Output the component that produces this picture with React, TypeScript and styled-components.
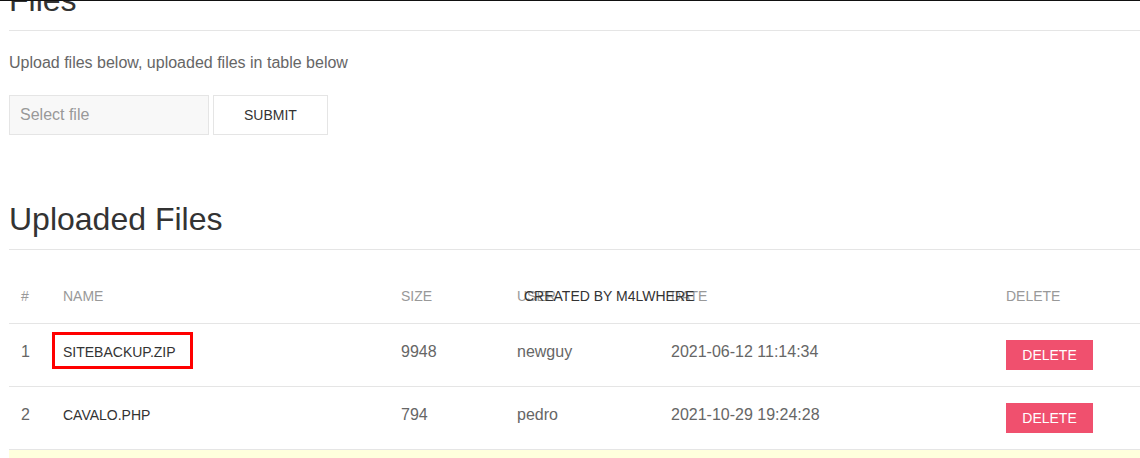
import React from "react";
import styled, { createGlobalStyle } from "styled-components";

const Global = createGlobalStyle`
  html, body {
    margin: 0;
    padding: 0;
    background: #fff;
    overflow: hidden;
  }
  body {
    font-family: "Liberation Sans", Arial, sans-serif;
    font-size: 16px;
    line-height: 1.5;
    color: #666;
  }
  * { box-sizing: border-box; }
`;

const TopEdge = styled.div`
  position: fixed;
  top: 0;
  left: 0;
  right: 0;
  height: 1px;
  background: #111;
  z-index: 10;
`;

const Page = styled.main`
  display: flow-root;
  padding: 0 0 0 9px;
`;

const Heading = styled.h2<{ $first?: boolean }>`
  margin: ${(p) => (p.$first ? "-21px 0 0" : "63px 0 0")};
  padding-bottom: 9px;
  border-bottom: 1px solid #e5e5e5;
  font-size: 32px;
  line-height: 42px;
  font-weight: 400;
  color: #333;
`;

const Intro = styled.p`
  margin: 20px 0 0;
  font-size: 16px;
  line-height: 24px;
  color: #666;
`;

const UploadForm = styled.form`
  display: flex;
  gap: 4px;
  margin-top: 20px;
`;

const FileInput = styled.input`
  width: 200px;
  height: 40px;
  padding: 0 10px;
  margin: 0;
  border: 1px solid #e5e5e5;
  background: #f8f8f8;
  font-family: inherit;
  font-size: 16px;
  color: #666;
  outline: none;
  &::placeholder {
    color: #999;
  }
`;

const Button = styled.button<{ $danger?: boolean; $small?: boolean }>`
  margin: 0;
  padding: 0 ${(p) => (p.$small ? "15px" : "30px")};
  min-width: ${(p) => (p.$small ? "87px" : "0")};
  height: ${(p) => (p.$small ? "30px" : "40px")};
  line-height: ${(p) => (p.$small ? "28px" : "38px")};
  border: 1px solid ${(p) => (p.$danger ? "transparent" : "#e5e5e5")};
  background: ${(p) => (p.$danger ? "#f0506e" : "#fff")};
  color: ${(p) => (p.$danger ? "#fff" : "#333")};
  font-family: inherit;
  font-size: 14px;
  text-transform: uppercase;
  cursor: pointer;
  vertical-align: middle;
`;

const TableWrap = styled.div`
  position: relative;
  margin-top: 20px;
`;

const Watermark = styled.div`
  position: absolute;
  left: 515px;
  top: 16px;
  font-size: 14px;
  line-height: 21px;
  color: #333;
  pointer-events: none;
  white-space: nowrap;
`;

const Table = styled.table`
  width: 1131px;
  border-collapse: collapse;
  border-spacing: 0;
  table-layout: fixed;
`;

const HeadCell = styled.th`
  padding: 16px 12px;
  text-align: left;
  vertical-align: bottom;
  font-size: 14px;
  line-height: 21px;
  font-weight: 400;
  color: #999;
  text-transform: uppercase;
`;

const Row = styled.tr<{ $hover?: boolean }>`
  border-top: 1px solid #e5e5e5;
  background: ${(p) => (p.$hover ? "#ffd" : "transparent")};
`;

const Cell = styled.td`
  padding: 16px 12px;
  vertical-align: top;
  font-size: 16px;
  line-height: 24px;
  color: #666;
  height: 62px;
`;

const FileName = styled.span<{ $marked?: boolean }>`
  position: relative;
  display: inline-block;
  font-size: 14px;
  line-height: 21px;
  color: #333;
  text-transform: uppercase;
  &::after {
    content: "";
    display: ${(p) => (p.$marked ? "block" : "none")};
    position: absolute;
    left: -11px;
    right: -17px;
    top: -10px;
    bottom: -6px;
    border: 3px solid #f00;
  }
`;

const files = [
  { id: 1, name: "sitebackup.zip", size: 9948, user: "newguy", date: "2021-06-12 11:14:34", marked: true },
  { id: 2, name: "cavalo.php", size: 794, user: "pedro", date: "2021-10-29 19:24:28", marked: false },
];

export default function App() {
  return (
    <>
      <Global />
      <TopEdge />
      <Page>
        <Heading $first>Files</Heading>
        <Intro>Upload files below, uploaded files in table below</Intro>
        <UploadForm onSubmit={(e) => e.preventDefault()}>
          <FileInput type="text" placeholder="Select file" />
          <Button type="submit">Submit</Button>
        </UploadForm>

        <Heading>Uploaded Files</Heading>
        <TableWrap>
          <Table>
            <colgroup>
              <col style={{ width: 42 }} />
              <col style={{ width: 338 }} />
              <col style={{ width: 116 }} />
              <col style={{ width: 154 }} />
              <col style={{ width: 335 }} />
              <col />
            </colgroup>
            <thead>
              <tr>
                <HeadCell>#</HeadCell>
                <HeadCell>Name</HeadCell>
                <HeadCell>Size</HeadCell>
                <HeadCell>User</HeadCell>
                <HeadCell>Date</HeadCell>
                <HeadCell>Delete</HeadCell>
              </tr>
            </thead>
            <tbody>
              {files.map((f) => (
                <Row key={f.id}>
                  <Cell>{f.id}</Cell>
                  <Cell>
                    <FileName $marked={f.marked}>{f.name}</FileName>
                  </Cell>
                  <Cell>{f.size}</Cell>
                  <Cell>{f.user}</Cell>
                  <Cell>{f.date}</Cell>
                  <Cell>
                    <Button $danger $small type="button">Delete</Button>
                  </Cell>
                </Row>
              ))}
              <Row $hover>
                <Cell />
                <Cell />
                <Cell />
                <Cell />
                <Cell />
                <Cell />
              </Row>
            </tbody>
          </Table>
          <Watermark>CREATED BY M4LWHERE</Watermark>
        </TableWrap>
      </Page>
    </>
  );
}
